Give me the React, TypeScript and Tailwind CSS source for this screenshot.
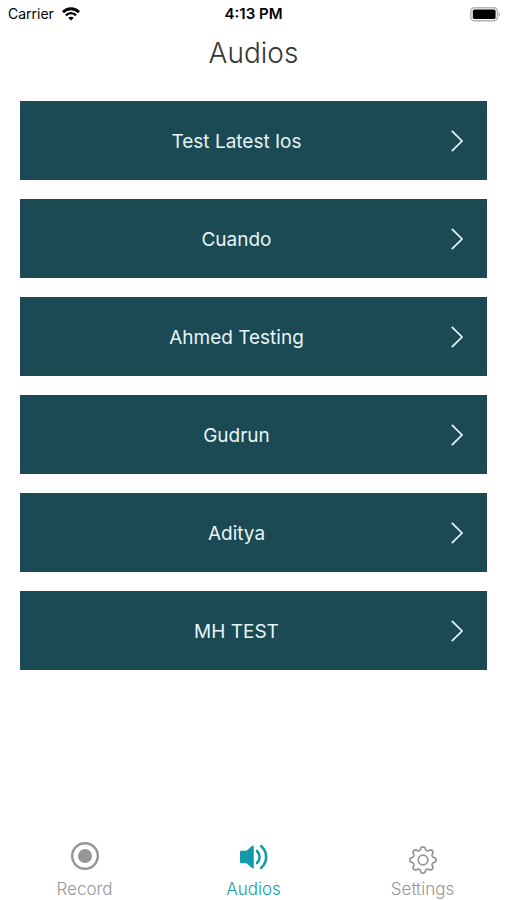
import { useState } from "react";
import type { ReactNode } from "react";
import { BsGear } from "react-icons/bs";

type TabId = "record" | "audios" | "settings";

const audios = ["Test Latest Ios", "Cuando", "Ahmed Testing", "Gudrun", "Aditya", "MH TEST"];

function WifiIcon() {
  return (
    <svg viewBox="0 0 18 14" className="h-3.5 w-[18px]" fill="none" stroke="currentColor" aria-hidden="true">
      <path d="M1 5.2C5.4 0.6 12.6 0.6 17 5.2" strokeWidth="2.8" />
      <path d="M3.9 8.3C6.8 5.4 11.2 5.4 14.1 8.3" strokeWidth="2.4" />
      <path d="M9 13.6L6.2 10.8C7.8 9.4 10.2 9.4 11.8 10.8Z" fill="currentColor" stroke="none" />
    </svg>
  );
}

function BatteryIcon() {
  return (
    <svg viewBox="0 0 31 15" className="h-[15px] w-[31px]" aria-hidden="true">
      <rect x="0.8" y="0.8" width="26.6" height="13" rx="3.6" fill="#fff" stroke="#b4b4b4" strokeWidth="1.5" />
      <rect x="2.8" y="2.6" width="22.8" height="9.4" rx="1.6" fill="#000" />
      <path d="M28.7 5.2C30.6 5.8 30.6 8.8 28.7 9.4Z" fill="#b4b4b4" />
    </svg>
  );
}

function ChevronIcon() {
  return (
    <svg viewBox="0 0 12 22" className="h-[22px] w-3 shrink-0" fill="none" stroke="currentColor" aria-hidden="true">
      <path d="M0.8 0.8L11 11L0.8 21.2" strokeWidth="1.7" />
    </svg>
  );
}

function RecordIcon() {
  return (
    <svg viewBox="0 0 28 28" className="size-7" aria-hidden="true">
      <circle cx="14" cy="14" r="12.8" fill="none" stroke="currentColor" strokeWidth="2.4" />
      <circle cx="14" cy="14" r="7" fill="currentColor" />
    </svg>
  );
}

function SpeakerIcon() {
  return (
    <svg viewBox="0 0 28 28" className="size-7" aria-hidden="true">
      <path
        d="M1 8.8H6.4L12 4.1Q13.8 2.8 13.8 4.8V25.2Q13.8 27.2 12 25.9L6.4 21.2H1Q0 21.2 0 20.2V9.8Q0 8.8 1 8.8Z"
        fill="currentColor"
      />
      <path
        d="M17 9C20.4 12.2 20.4 17.8 17 21M21.2 4.2C27.8 10 27.8 20 21.2 25.8"
        fill="none"
        stroke="currentColor"
        strokeWidth="2.6"
        strokeLinecap="round"
      />
    </svg>
  );
}

const tabs: { id: TabId; label: string; icon: ReactNode }[] = [
  { id: "record", label: "Record", icon: <RecordIcon /> },
  { id: "audios", label: "Audios", icon: <SpeakerIcon /> },
  { id: "settings", label: "Settings", icon: <BsGear className="mt-1 size-7" aria-hidden="true" /> },
];

export default function App() {
  const [activeTab, setActiveTab] = useState<TabId>("audios");

  return (
    <div className="flex min-h-screen flex-col bg-white font-['Inter','Liberation_Sans',sans-serif]">
      <div className="grid h-7 grid-cols-3 items-center px-2 text-sm text-black">
        <div className="flex items-center gap-2">
          <span>Carrier</span>
          <WifiIcon />
        </div>
        <span className="text-center text-[15px] font-semibold">4:13 PM</span>
        <div className="-mr-0.5 flex justify-end">
          <BatteryIcon />
        </div>
      </div>

      <h1 className="mt-1 text-center text-[28px] leading-[42px] font-light text-[#363636]">Audios</h1>

      <ul className="mt-[27px] flex flex-col gap-[19px] px-5">
        {audios.map((name) => (
          <li key={name}>
            <button className="flex h-[79px] w-full items-center bg-[#1b4954] pr-6 pl-0.5 text-[19px] text-[#e6f5f8]">
              <span className="flex-1 pt-1 text-center">{name}</span>
              <ChevronIcon />
            </button>
          </li>
        ))}
      </ul>

      <nav className="mt-auto grid grid-cols-3">
        {tabs.map((tab) => (
          <button
            key={tab.id}
            onClick={() => setActiveTab(tab.id)}
            aria-current={tab.id === activeTab ? "page" : undefined}
            className={`flex flex-col items-center text-[17px] font-light ${
              tab.id === activeTab ? "text-[#149ba9]" : "text-[#969696]"
            }`}
          >
            <span className="h-9">{tab.icon}</span>
            <span className="leading-[22px]">{tab.label}</span>
          </button>
        ))}
      </nav>
    </div>
  );
}
